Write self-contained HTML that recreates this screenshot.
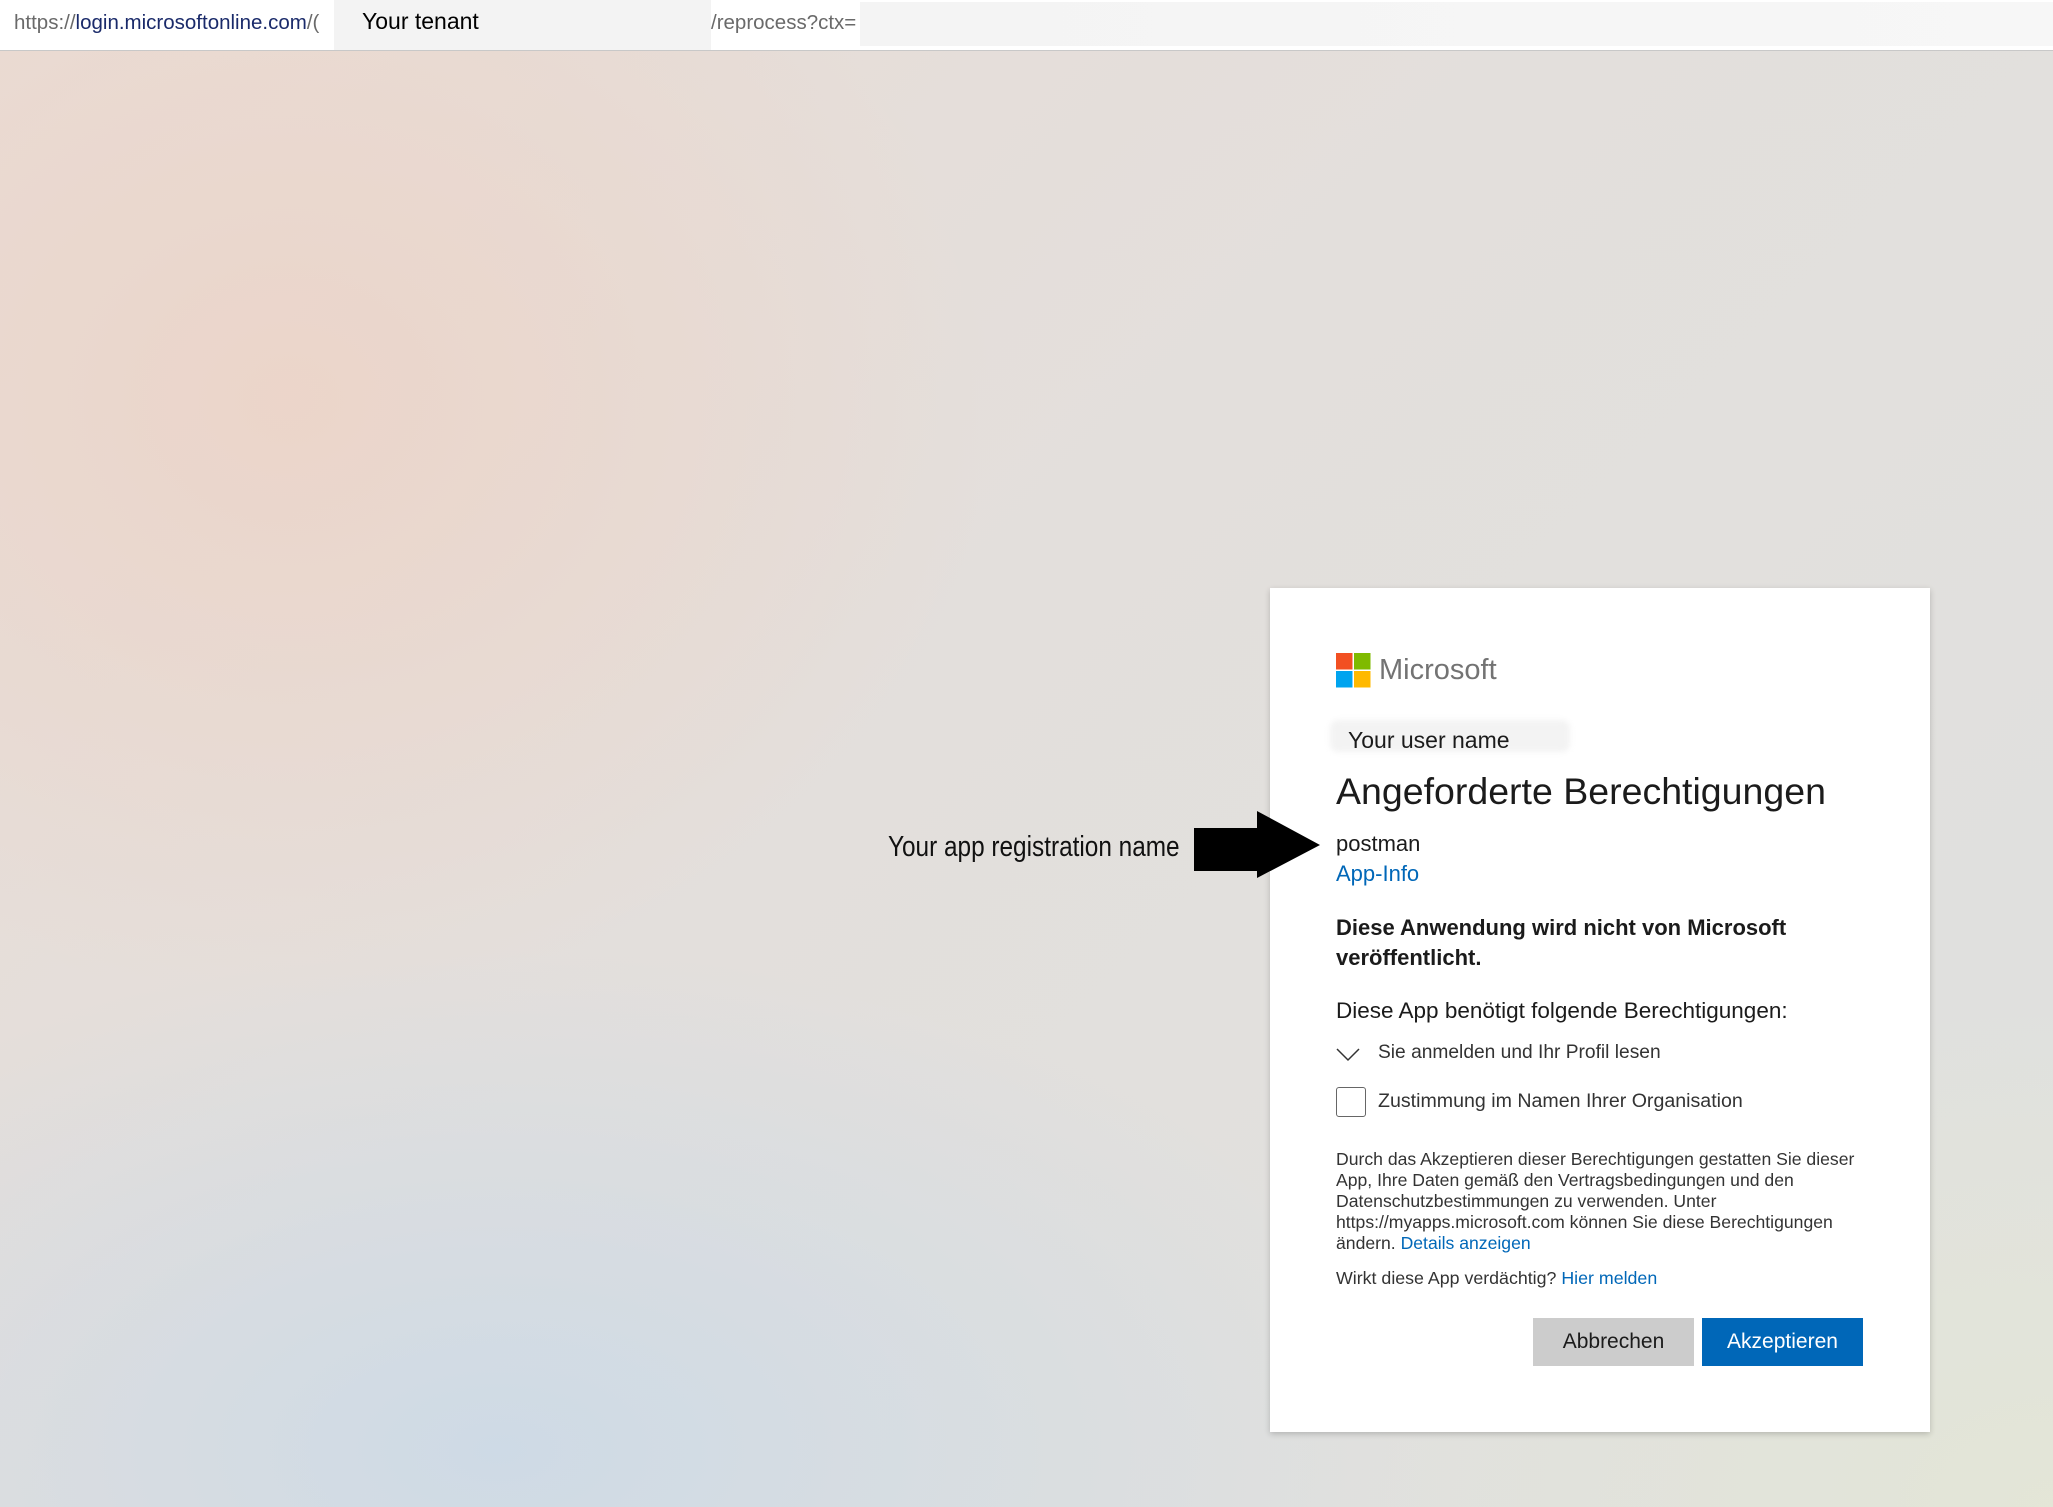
<!DOCTYPE html>
<html><head><meta charset="utf-8"><style>
*{margin:0;padding:0;box-sizing:border-box}
html,body{width:2053px;height:1507px;overflow:hidden}
body{font-family:"Liberation Sans",sans-serif;position:relative;
background:
radial-gradient(ellipse 700px 600px at 290px 400px,rgba(236,212,200,0.9),rgba(236,212,200,0) 100%),
radial-gradient(ellipse 900px 500px at 500px 1450px,rgba(205,218,230,0.95),rgba(205,218,230,0) 100%),
radial-gradient(ellipse 700px 500px at 2053px 1507px,rgba(228,230,214,0.9),rgba(228,230,214,0) 100%),
linear-gradient(135deg,#e9dcd5 0%,#e3dfdc 45%,#dfe1df 100%);}
.bar{position:absolute;left:0;top:0;width:2053px;height:51px;background:#fff;border-bottom:1px solid #c8c8c8;font-size:20.5px;color:#6a6a6a}
.bar span{position:absolute;top:11px;white-space:nowrap}
.blur1{position:absolute;left:334px;top:0;width:377px;height:50px;background:#f3f3f3}
.blur2{position:absolute;left:860px;top:2px;width:1193px;height:44px;background:linear-gradient(90deg,#f4f4f4,#f7f7f7)}
.card{position:absolute;left:1270px;top:588px;width:660px;height:844px;background:#fff;box-shadow:0 2px 6px rgba(0,0,0,0.2)}
.a{position:absolute;white-space:nowrap;color:#1b1b1b}
.link{color:#0067b8}
.btn{position:absolute;top:1318px;height:48px;width:161px;font-size:21px;text-align:center;line-height:48px}
</style></head><body>
<div class="bar">
<span style="left:14px">https://<span style="position:static;color:#1a2a6a">login.microsoftonline.com</span>/(</span>
<div class="blur1"></div>
<span style="left:362px;top:8px;font-size:23px;color:#000">Your tenant</span>
<span style="left:711px">/reprocess?ctx=</span>
<div class="blur2"></div>
</div>

<div class="card"></div>
<div class="a" style="left:888px;top:831px;font-size:29px;color:#111;transform:scaleX(0.84);transform-origin:left top">Your app registration name</div>
<svg style="position:absolute;left:1194px;top:810px" width="128" height="70"><polygon points="0,18 63,18 63,1 126,35 63,68 63,61 0,61" fill="#000"/></svg>

<svg style="position:absolute;left:1336px;top:653px" width="35" height="35">
<rect x="0" y="0" width="16.5" height="16.5" fill="#f25022"/><rect x="18" y="0" width="16.5" height="16.5" fill="#7fba00"/>
<rect x="0" y="18" width="16.5" height="16.5" fill="#00a4ef"/><rect x="18" y="18" width="16.5" height="16.5" fill="#ffb900"/></svg>
<div class="a" style="left:1379px;top:654px;font-size:29px;color:#737373">Microsoft</div>
<div style="position:absolute;left:1330px;top:720px;width:240px;height:32px;background:#f3f3f3;border-radius:8px;filter:blur(3px)"></div>
<div class="a" style="left:1348px;top:727px;font-size:23px">Your user name</div>
<div class="a" style="left:1336px;top:770px;font-size:37.5px">Angeforderte Berechtigungen</div>
<div class="a" style="left:1336px;top:831px;font-size:22px">postman</div>
<div class="a link" style="left:1336px;top:861px;font-size:22px">App-Info</div>
<div class="a" style="left:1336px;top:913px;font-size:22px;font-weight:bold;line-height:30px">Diese Anwendung wird nicht von Microsoft<br>veröffentlicht.</div>
<div class="a" style="left:1336px;top:998px;font-size:22.5px">Diese App benötigt folgende Berechtigungen:</div>
<svg style="position:absolute;left:1336px;top:1047px" width="26" height="16"><polyline points="1,2 12,13 23,2" fill="none" stroke="#333" stroke-width="1.5"/></svg>
<div class="a" style="left:1378px;top:1042px;font-size:19.2px;color:#333">Sie anmelden und Ihr Profil lesen</div>
<div style="position:absolute;left:1336px;top:1087px;width:30px;height:30px;border:1.5px solid #666;border-radius:3px"></div>
<div class="a" style="left:1378px;top:1090px;font-size:19.6px;color:#333">Zustimmung im Namen Ihrer Organisation</div>
<div class="a" style="left:1336px;top:1149px;font-size:17.6px;line-height:21px;color:#333">Durch das Akzeptieren dieser Berechtigungen gestatten Sie dieser<br>App, Ihre Daten gemäß den Vertragsbedingungen und den<br>Datenschutzbestimmungen zu verwenden. Unter<br>https://myapps.microsoft.com können Sie diese Berechtigungen<br>ändern. <span class="link">Details anzeigen</span></div>
<div class="a" style="left:1336px;top:1268px;font-size:17.8px;color:#333">Wirkt diese App verdächtig? <span class="link">Hier melden</span></div>
<div class="btn" style="left:1533px;background:#cccccc;color:#1b1b1b">Abbrechen</div>
<div class="btn" style="left:1702px;background:#0067b8;color:#fff">Akzeptieren</div>
</body></html>
